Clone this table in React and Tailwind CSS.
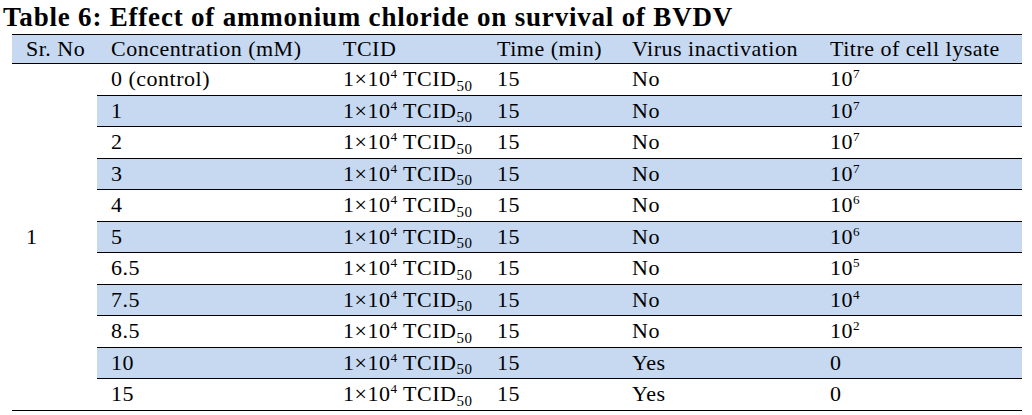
const rows = [
  { c: "0 (control)", v: "No", t: "7" },
  { c: "1", v: "No", t: "7" },
  { c: "2", v: "No", t: "7" },
  { c: "3", v: "No", t: "7" },
  { c: "4", v: "No", t: "6" },
  { c: "5", v: "No", t: "6" },
  { c: "6.5", v: "No", t: "5" },
  { c: "7.5", v: "No", t: "4" },
  { c: "8.5", v: "No", t: "2" },
  { c: "10", v: "Yes", t: null },
  { c: "15", v: "Yes", t: null },
]

const Tcid = () => (
  <span>
    1×10<sup className="text-[0.6em] top-[-0.6em]">4</sup> TCID<sub className="text-[0.68em] bottom-[-0.3em]">50</sub>
  </span>
)

const App = () => {
  return (
    <div className="w-[1032px] h-[415px] bg-white text-black font-['Liberation_Serif',serif]">
      <h1 className="pl-[3px] h-[34px] leading-[34px] text-[27px] font-bold tracking-[0.8px]">
        Table 6: Effect of ammonium chloride on survival of BVDV
      </h1>

      <table className="ml-[12px] w-[1010px] table-fixed border-collapse text-[22px] tracking-[0.5px]">
        <colgroup>
          <col className="w-[85px]" />
          <col className="w-[232px]" />
          <col className="w-[154px]" />
          <col className="w-[135px]" />
          <col className="w-[198px]" />
          <col className="w-[206px]" />
        </colgroup>
        <thead>
          <tr className="bg-[#c6d9f1] border-y border-black h-[29px]">
            <th className="font-normal text-left pl-[14px] leading-none">Sr. No</th>
            <th className="font-normal text-left pl-[14px] leading-none">Concentration (mM)</th>
            <th className="font-normal text-left pl-[14px] leading-none">TCID</th>
            <th className="font-normal text-left pl-[14px] leading-none">Time (min)</th>
            <th className="font-normal text-left pl-[14px] leading-none">Virus inactivation</th>
            <th className="font-normal text-left pl-[14px] leading-none">Titre of cell lysate</th>
          </tr>
        </thead>
        <tbody>
          {rows.map((r, i) => (
            <tr key={r.c} className={i % 2 === 1 ? "bg-[#c6d9f1] h-[31.5px]" : "h-[31.5px]"}>
              {i === 0 && (
                <td rowSpan={rows.length} className="bg-white pl-[14px] border-b border-black leading-none">
                  1
                </td>
              )}
              <td className="pl-[14px] border-b border-black leading-none">{r.c}</td>
              <td className="pl-[14px] border-b border-black leading-none"><Tcid /></td>
              <td className="pl-[14px] border-b border-black leading-none">15</td>
              <td className="pl-[14px] border-b border-black leading-none">{r.v}</td>
              <td className="pl-[14px] border-b border-black leading-none">
                {r.t ? (
                  <span>10<sup className="text-[0.6em] top-[-0.6em]">{r.t}</sup></span>
                ) : (
                  "0"
                )}
              </td>
            </tr>
          ))}
        </tbody>
      </table>
    </div>
  )
}

export default App
